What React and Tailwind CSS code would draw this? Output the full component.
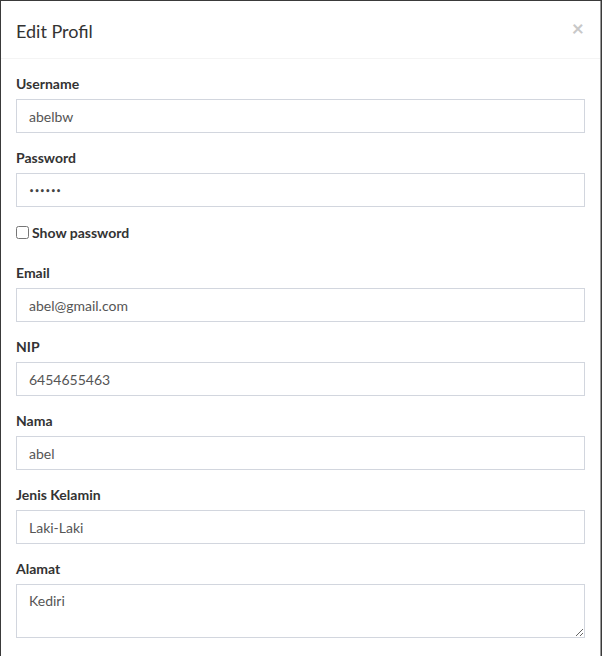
const fields = [
  { label: "Username", value: "abelbw" },
  { label: "Password", value: "••••••", password: true },
  { label: "Email", value: "abel@gmail.com" },
  { label: "NIP", value: "6454655463" },
  { label: "Nama", value: "abel" },
  { label: "Jenis Kelamin", value: "Laki-Laki" },
];

function Field({ label, value, password }) {
  return (
    <div className="mb-[15px]">
      <label className="mb-[5px] block text-[14px] font-bold leading-[20px] text-[#333]">{label}</label>
      <div className="flex h-[34px] items-center border border-[#d2d6de] bg-white px-[12px] text-[14px] text-[#555]">
        {password ? (
          <span className="pt-[4px] text-[8px] font-bold tracking-[0.3px] text-[#444]" style={{ fontFamily: '"DejaVu Sans", sans-serif' }}>
            {value}
          </span>
        ) : (
          value
        )}
      </div>
    </div>
  );
}

export default function App() {
  const font = { fontFamily: '"Source Sans Pro", Lato, "Liberation Sans", sans-serif' };
  return (
    <div className="h-[656px] w-[602px] overflow-hidden bg-[#3a3a3a] pl-px pt-px" style={font}>
      <div className="h-[700px] w-[600px] border-r border-[#999] bg-white">
        <div className="flex h-[58px] items-center justify-between border-b border-[#f4f4f4] px-[15px] pt-[3px]">
          <h4 className="text-[18px] leading-[26px] text-[#333]">Edit Profil</h4>
          <span className="mr-[1px] -mt-[8px] text-[21px] font-bold leading-none text-[#c8c8c8]">×</span>
        </div>
        <div className="px-[15px] pt-[15px]">
          {fields.slice(0, 2).map((f) => (
            <Field key={f.label} {...f} />
          ))}
          <div className="mt-[5px] mb-[21px] flex h-[20px] items-center gap-[3px] pt-px">
            <input type="checkbox" className="m-0 h-[13px] w-[13px]" />
            <span className="text-[14px] font-bold text-[#333]">Show password</span>
          </div>
          {fields.slice(2).map((f) => (
            <Field key={f.label} {...f} />
          ))}
          <div>
            <label className="mb-[5px] block text-[14px] font-bold leading-[20px] text-[#333]">Alamat</label>
            <textarea
              rows={2}
              defaultValue="Kediri"
              className="block h-[54px] w-full resize-y border border-[#d2d6de] px-[12px] py-[6px] text-[14px] leading-[20px] text-[#555] outline-none"
            />
          </div>
        </div>
      </div>
    </div>
  );
}
